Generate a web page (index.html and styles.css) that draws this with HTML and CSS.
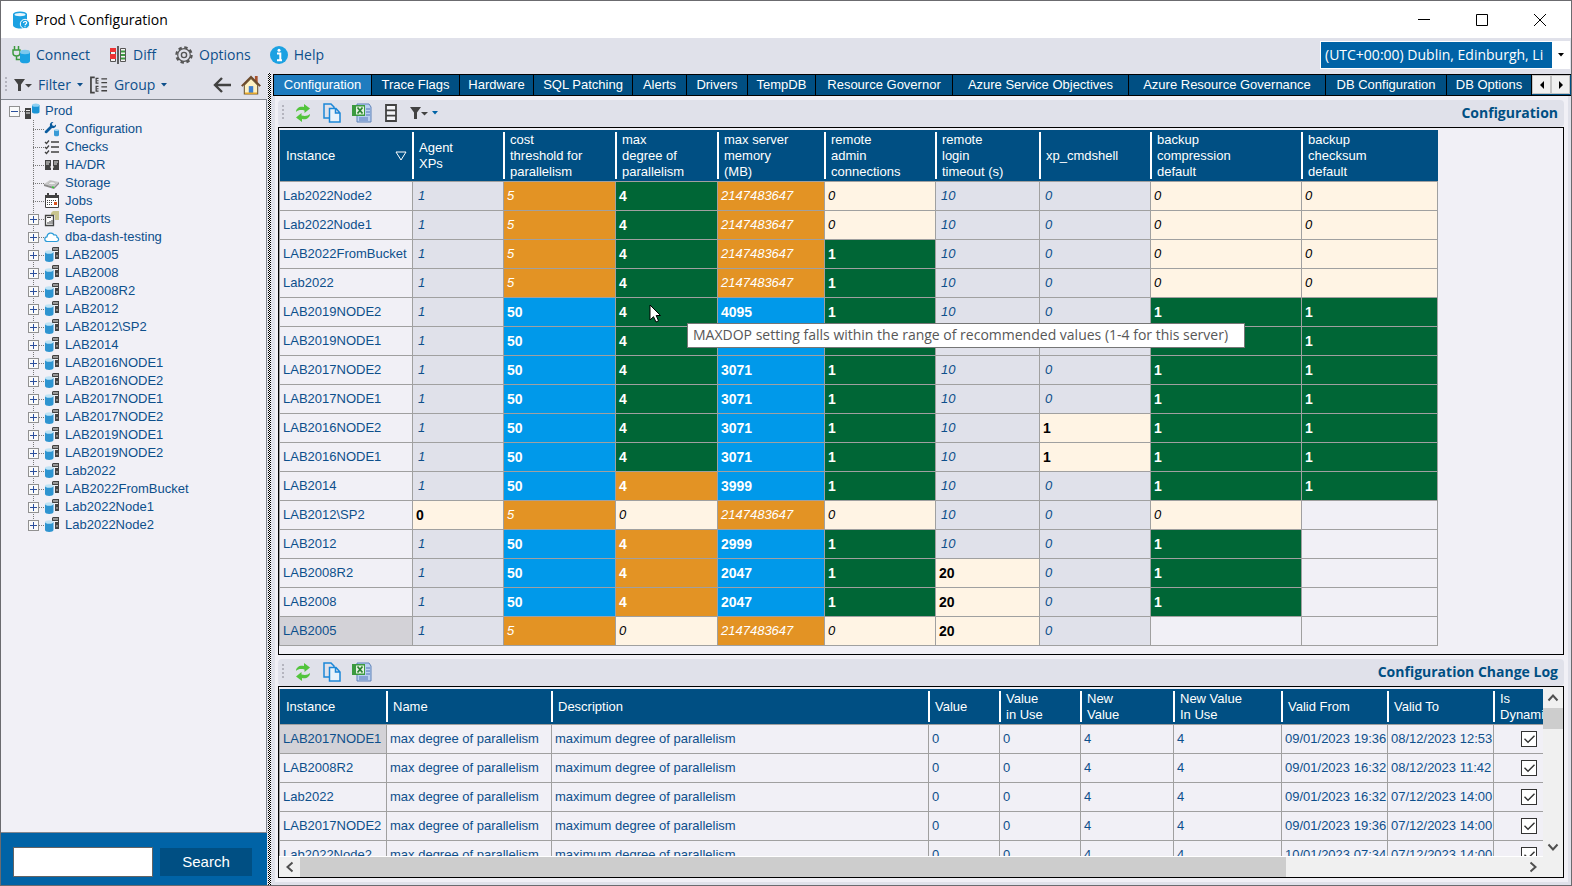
FILE: index.html
```html
<!DOCTYPE html>
<html lang="en">
<head>
<meta charset="utf-8">
<title>Prod \ Configuration</title>
<link rel="stylesheet" href="styles.css">
</head>
<body>
<svg class="defs" aria-hidden="true">
  <symbol id="i-app" viewBox="0 0 18 18"><path d="M1 3v11c0 2 3 3.500 7 3.500s7-1.500 7-3.500V3z" fill="#1ba1e2"/><ellipse cx="8" cy="3.300" rx="7" ry="2.800" fill="#1ba1e2"/><ellipse cx="8" cy="3.600" rx="5.500" ry="1.700" fill="#e8f6fd"/><circle cx="13" cy="13" r="4.700" fill="#1ba1e2" stroke="#fff"/><path d="M11.500 12c0-2 3.200-2 3.200-.2 0 1.200-1.600 1.200-1.600 2.400M13 15.200v1" stroke="#fff" stroke-width="1.200" fill="none"/></symbol>
  <symbol id="i-connect" viewBox="0 0 18 18"><path d="M2.500 0v4M6.500 0v4M1 4h7v3c0 2-1.500 3-3.500 3S1 9 1 7zM4.500 10v3.500H8" stroke="#3c9a3f" stroke-width="1.500" fill="none"/><path d="M8 6v9c0 1.500 2 2.300 5 2.300s5-.8 5-2.300V6z" fill="#1ba1e2"/><ellipse cx="13" cy="6" rx="5" ry="2.200" fill="#7cc8ee"/></symbol>
  <symbol id="i-diff" viewBox="0 0 18 18"><path d="M1.500 2.500h5v13h-5zM11.500 2.500h5v13h-5z" fill="#f4f4f4" stroke="#555"/><path d="M1 2h6v4H1zM1 8h6v5H1z" fill="#e33"/><path d="M12 5.500h4M12 9h4M12 12.500h4" stroke="#3c9a3f" stroke-width="2"/><path d="M9 0v18" stroke="#333" stroke-width="1.500"/></symbol>
  <symbol id="i-gear" viewBox="0 0 18 18"><circle cx="9" cy="9" r="7.600" fill="none" stroke="#555" stroke-width="2.200" stroke-dasharray="3.400 2.570"/><circle cx="9" cy="9" r="6.300" fill="none" stroke="#555" stroke-width="1.200"/><circle cx="9" cy="9" r="2.600" fill="none" stroke="#555" stroke-width="1.400"/></symbol>
  <symbol id="i-help" viewBox="0 0 18 18"><circle cx="9" cy="9" r="9" fill="#1ba1e2"/><path d="M7 7.500h3.300V14M7 14.200h5" stroke="#fff" stroke-width="2" fill="none"/><circle cx="9" cy="4.200" r="1.500" fill="#fff"/></symbol>
  <symbol id="i-filter" viewBox="0 0 18 14"><path d="M0 1h11L7 6.500V13H4V6.500z" fill="#424242"/><path d="M11 6h7l-3.500 3.500z" fill="#424242"/></symbol>
  <symbol id="i-group" viewBox="0 0 19 18"><path d="M5 1H1v16h4" fill="none" stroke="#424242" stroke-width="1.800"/><path d="M9 2H6.500v5H9M9 10.500H6.500v5H9" fill="none" stroke="#424242" stroke-width="1.300"/><path d="M7 4.500h2M7 13h2" stroke="#424242"/><path d="M12 2.500h6M12 6.500h6M12 11h6M12 15h6" stroke="#424242" stroke-width="1.500"/></symbol>
  <symbol id="i-back" viewBox="0 0 18 16"><path d="M9 1L2 8l7 7M2 8h16" fill="none" stroke="#424242" stroke-width="2.400"/></symbol>
  <symbol id="i-home" viewBox="0 0 18 18"><path d="M12.500 1H15v6l-2.500-2z" fill="#a8522d"/><path d="M3 9l6-6 6 6v8H3z" fill="#fff2c4" stroke="#6e5a3a"/><path d="M7 10h4v7H7z" fill="#3d7fd0"/><path d="M3.500 16.500h11" stroke="#e4a72c" stroke-width="1.500"/><path d="M.7 10L9 1.700 17.300 10" fill="none" stroke="#6d4a2b" stroke-width="1.800"/></symbol>
  <symbol id="i-root" viewBox="0 0 16 16"><path d="M0 5h6v11H0z" fill="#424242"/><path d="M1 7.500h4M1 10h4" stroke="#eee"/><path d="M7 2v7c0 1 2 1.500 3.800 1.500S14.500 10 14.500 9V2z" fill="#1b95d6"/><ellipse cx="10.750" cy="2.200" rx="3.700" ry="1.600" fill="#8fd0f2"/></symbol>
  <symbol id="i-config" viewBox="0 0 16 16"><path d="M1 10l5-5c-.7-2.500 1-4.500 3.500-4L7.800 2.800 8.500 4.500l1.700.6L12 3.500c.5 2.300-1.500 4.200-4 3.500l-5 5c-1.500 1-3-.8-2-2z" fill="#0b5c9e"/><path d="M10 9v5c0 .9 1 1.300 2.500 1.300S15 14.900 15 14V9z" fill="#3a9bd6"/><ellipse cx="12.500" cy="9" rx="2.500" ry="1.100" fill="#a9d8f1"/></symbol>
  <symbol id="i-checks" viewBox="0 0 16 16"><path d="M1 3l1.500 1.500L5 1.500M1 8l1.500 1.500L5 6.500M1 13l1.500 1.500L5 11.500M7 3h8M7 8h8M7 13h8" fill="none" stroke="#424242" stroke-width="1.300"/></symbol>
  <symbol id="i-hadr" viewBox="0 0 16 16"><path d="M1 3h6v10H1zM9 3h6v10H9z" fill="#424242"/><path d="M2 5h4M2 7h3M10 5h4M10 7h3M6 10h4" stroke="#eee"/></symbol>
  <symbol id="i-storage" viewBox="0 0 16 16"><path d="M0 9l6-4 9 2-5 5z" fill="#c8c8c8"/><path d="M0 9l10 3 5-5v2l-5 5L0 11z" fill="#8a8a8a"/><ellipse cx="8" cy="8.300" rx="3.300" ry="1.500" fill="#eee" stroke="#999" stroke-width=".5"/><path d="M8 12l2 .5" stroke="#3c3" stroke-width="1.500"/></symbol>
  <symbol id="i-jobs" viewBox="0 0 16 16"><path d="M1.500 2.500h13v12h-13z" fill="#fff" stroke="#424242"/><path d="M1 2h14v3H1z" fill="#424242"/><path d="M4 0v3M12 0v3" stroke="#424242" stroke-width="2"/><path d="M3 7.500h10M3 9.500h6M3 11.500h6" stroke="#424242" stroke-dasharray="1 1"/><path d="M10 9h3v3h-3z" fill="#d9531e"/></symbol>
  <symbol id="i-reports" viewBox="0 0 16 16"><path d="M7 2l2-2h6v9h-4V4H7z" fill="#c9c58e"/><path d="M1.500 4.500h8v10h-8z" fill="#fff" stroke="#424242" stroke-width="1.300"/><path d="M3 6.500h4M4 13v-2M6 13v-3M8 13V9" stroke="#424242"/></symbol>
  <symbol id="i-cloud" viewBox="0 0 16 16"><path d="M3.500 12.500c-3.500 0-3.500-4.500-.5-4.700.2-4 5.500-5 7-1.800 2-.7 3.300.8 3 2.300 2.500.7 2 4.200-.6 4.200z" fill="#fff" stroke="#2b9bd8" stroke-width="1.200"/></symbol>
  <symbol id="i-server" viewBox="0 0 16 16"><path d="M9 0h6v12h-4V4H8V1z" fill="#424242"/><path d="M9 2h5M11 4.500h3" stroke="#eee"/><path d="M12 9h2" stroke="#ccc"/><path d="M1 5v8c0 1.200 2 2 4.200 2s4.300-.8 4.300-2V5z" fill="#2e94d0"/><ellipse cx="5.200" cy="5" rx="4.200" ry="1.800" fill="#bfe2f4"/></symbol>
  <symbol id="i-refresh" viewBox="0 0 16 18"><path d="M1 8c0-4 4-6 8-5V0l6 4.500L9.500 9V6.500C6 5.500 3 6 1 8z" fill="#52c43c"/><path d="M15 10c0 4-4 6-8 5v3l-6-4.500L6.500 9v2.500c3.500 1 6.500.5 8.500-1.500z" fill="#52c43c"/></symbol>
  <symbol id="i-copy" viewBox="0 0 18 20"><path d="M6 15H1V1h7l3 3v2" fill="none" stroke="#1b87d8" stroke-width="1.500"/><path d="M6.500 5.500H13L17 10v9H6.500zM12.500 5.500V10H17" fill="#e8f3fb" stroke="#1b87d8" stroke-width="1.500"/></symbol>
  <symbol id="i-excel" viewBox="0 0 20 20"><path d="M5 1h12l2 3v15H5z" fill="#b9d0f0" stroke="#5f83b9"/><path d="M14 6h4M14 9h4M14 12h4M7 15h9M7 17h9" stroke="#5577b8"/><path d="M0 2h13v11H0z" fill="#3c9a3f"/><path d="M4 3.500h8v8H4z" fill="#e5f3e0"/><path d="M5.500 4.500l5 6M10.500 4.500l-5 6" stroke="#2c8431" stroke-width="1.800"/></symbol>
  <symbol id="i-cols" viewBox="0 0 12 18"><path d="M1 1h10v16H1zM1 6.300h10M1 11.600h10" fill="#f4f4f8" stroke="#424242" stroke-width="1.800"/></symbol>
  <symbol id="i-caret" viewBox="0 0 6 4"><path d="M0 0h6L3 3.500z" fill="currentColor"/></symbol>
  <symbol id="i-chev" viewBox="0 0 12 12"><path d="M1.500 8.500L6 3.500l4.500 5" fill="none" stroke="#505050" stroke-width="2"/></symbol>
</svg>

<header class="title-bar">
  <svg class="ico18"><use href="#i-app"/></svg>
  <h1>Prod \ Configuration</h1>
  <div class="win-buttons">
    <button aria-label="Minimize"><svg class="ico12" viewBox="0 0 12 12"><path d="M0 5.500h12" stroke="#000"/></svg></button>
    <button aria-label="Maximize"><svg class="ico12" viewBox="0 0 12 12"><path d="M.5.500h11v11H.5z" stroke="#000" fill="none"/></svg></button>
    <button aria-label="Close"><svg class="ico12" viewBox="0 0 12 12"><path d="M0 0l12 12M12 0L0 12" stroke="#000"/></svg></button>
  </div>
</header>

<nav class="menu-bar">
  <button><svg class="ico18"><use href="#i-connect"/></svg>Connect</button>
  <button><svg class="ico18"><use href="#i-diff"/></svg>Diff</button>
  <button><svg class="ico18"><use href="#i-gear"/></svg>Options</button>
  <button><svg class="ico18"><use href="#i-help"/></svg>Help</button>
  <label class="zone">
    <select aria-label="Time zone"><option>(UTC+00:00) Dublin, Edinburgh, Li</option></select>
    <svg class="caret"><use href="#i-caret"/></svg>
  </label>
</nav>

<main class="work">
  <aside class="side">
    <div class="side-tools">
      <span class="grip"></span>
      <button><svg class="ico-filter"><use href="#i-filter"/></svg>Filter<svg class="caret"><use href="#i-caret"/></svg></button>
      <button><svg class="ico18"><use href="#i-group"/></svg>Group<svg class="caret"><use href="#i-caret"/></svg></button>
      <span class="spacer"></span>
      <button class="nav-btn" aria-label="Back"><svg class="ico18"><use href="#i-back"/></svg></button>
      <button class="nav-btn" aria-label="Home"><svg class="ico20"><use href="#i-home"/></svg></button>
    </div>
    <div class="tree">
      <div class="root"><button class="exp open" aria-label="Collapse"></button><i class="dots"></i><svg class="ico16"><use href="#i-root"/></svg>Prod</div>
      <ul>
        <li><i class="stub"></i><svg class="ico16"><use href="#i-config"/></svg>Configuration</li>
        <li><i class="stub"></i><svg class="ico16"><use href="#i-checks"/></svg>Checks</li>
        <li><i class="stub"></i><svg class="ico16"><use href="#i-hadr"/></svg>HA/DR</li>
        <li><i class="stub"></i><svg class="ico16"><use href="#i-storage"/></svg>Storage</li>
        <li><i class="stub"></i><svg class="ico16"><use href="#i-jobs"/></svg>Jobs</li>
        <li><button class="exp" aria-label="Expand"></button><i class="dots"></i><svg class="ico16"><use href="#i-reports"/></svg>Reports</li>
        <li><button class="exp" aria-label="Expand"></button><i class="dots"></i><svg class="ico16"><use href="#i-cloud"/></svg>dba-dash-testing</li>
        <li><button class="exp" aria-label="Expand"></button><i class="dots"></i><svg class="ico16"><use href="#i-server"/></svg>LAB2005</li>
        <li><button class="exp" aria-label="Expand"></button><i class="dots"></i><svg class="ico16"><use href="#i-server"/></svg>LAB2008</li>
        <li><button class="exp" aria-label="Expand"></button><i class="dots"></i><svg class="ico16"><use href="#i-server"/></svg>LAB2008R2</li>
        <li><button class="exp" aria-label="Expand"></button><i class="dots"></i><svg class="ico16"><use href="#i-server"/></svg>LAB2012</li>
        <li><button class="exp" aria-label="Expand"></button><i class="dots"></i><svg class="ico16"><use href="#i-server"/></svg>LAB2012\SP2</li>
        <li><button class="exp" aria-label="Expand"></button><i class="dots"></i><svg class="ico16"><use href="#i-server"/></svg>LAB2014</li>
        <li><button class="exp" aria-label="Expand"></button><i class="dots"></i><svg class="ico16"><use href="#i-server"/></svg>LAB2016NODE1</li>
        <li><button class="exp" aria-label="Expand"></button><i class="dots"></i><svg class="ico16"><use href="#i-server"/></svg>LAB2016NODE2</li>
        <li><button class="exp" aria-label="Expand"></button><i class="dots"></i><svg class="ico16"><use href="#i-server"/></svg>LAB2017NODE1</li>
        <li><button class="exp" aria-label="Expand"></button><i class="dots"></i><svg class="ico16"><use href="#i-server"/></svg>LAB2017NODE2</li>
        <li><button class="exp" aria-label="Expand"></button><i class="dots"></i><svg class="ico16"><use href="#i-server"/></svg>LAB2019NODE1</li>
        <li><button class="exp" aria-label="Expand"></button><i class="dots"></i><svg class="ico16"><use href="#i-server"/></svg>LAB2019NODE2</li>
        <li><button class="exp" aria-label="Expand"></button><i class="dots"></i><svg class="ico16"><use href="#i-server"/></svg>Lab2022</li>
        <li><button class="exp" aria-label="Expand"></button><i class="dots"></i><svg class="ico16"><use href="#i-server"/></svg>LAB2022FromBucket</li>
        <li><button class="exp" aria-label="Expand"></button><i class="dots"></i><svg class="ico16"><use href="#i-server"/></svg>Lab2022Node1</li>
        <li><button class="exp" aria-label="Expand"></button><i class="dots"></i><svg class="ico16"><use href="#i-server"/></svg>Lab2022Node2</li>
      </ul>
    </div>
    <form class="search"><input type="text" aria-label="Search text"><button type="button">Search</button></form>
  </aside>
  <div class="splitter"></div>

  <section class="content">
    <div class="tabs" role="tablist">
      <button role="tab" class="active">Configuration</button><button role="tab">Trace Flags</button><button role="tab">Hardware</button><button role="tab">SQL Patching</button><button role="tab">Alerts</button><button role="tab">Drivers</button><button role="tab">TempDB</button><button role="tab">Resource Governor</button><button role="tab">Azure Service Objectives</button><button role="tab">Azure Resource Governance</button><button role="tab">DB Configuration</button><button role="tab">DB Options</button>
      <div class="tab-scroll">
        <button aria-label="Scroll tabs left"><svg class="ico8" viewBox="0 0 8 8"><path d="M6 0v8L2 4z"/></svg></button>
        <button aria-label="Scroll tabs right"><svg class="ico8" viewBox="0 0 8 8"><path d="M2 0v8l4-4z"/></svg></button>
      </div>
    </div>
    <div class="page">
      <div class="bar">
        <span class="grip"></span>
        <button aria-label="Refresh"><svg class="ico18"><use href="#i-refresh"/></svg></button>
        <button aria-label="Copy"><svg class="ico20"><use href="#i-copy"/></svg></button>
        <button aria-label="Excel"><svg class="ico20"><use href="#i-excel"/></svg></button>
        <button aria-label="Columns"><svg class="ico18"><use href="#i-cols"/></svg></button>
        <button aria-label="Filter"><svg class="ico-filter"><use href="#i-filter"/></svg><svg class="caret"><use href="#i-caret"/></svg></button>
        <h2>Configuration</h2>
      </div>
      <div class="grid top-grid">
        <table class="config">
          <colgroup><col class="c133"><col class="c91"><col class="c112"><col class="c102"><col class="c107"><col class="c111"><col class="c104"><col class="c111"><col class="c151"><col class="c136"></colgroup>
          <thead><tr>
            <th><span class="sorted">Instance<svg class="ico-sort" viewBox="0 0 12 10"><path d="M1 1h10L6 9z" fill="none" stroke="#fff"/></svg></span></th>
            <th>Agent<br>XPs</th><th>cost<br>threshold for<br>parallelism</th><th>max<br>degree of<br>parallelism</th><th>max server<br>memory<br>(MB)</th><th>remote<br>admin<br>connections</th><th>remote<br>login<br>timeout (s)</th><th>xp_cmdshell</th><th>backup<br>compression<br>default</th><th>backup<br>checksum<br>default</th>
          </tr></thead>
          <tbody>
            <tr><td>Lab2022Node2</td><td class="def">1</td><td class="warn">5</td><td class="good">4</td><td class="warn">2147483647</td><td class="note">0</td><td class="def">10</td><td class="def">0</td><td class="note">0</td><td class="note">0</td></tr>
            <tr><td>Lab2022Node1</td><td class="def">1</td><td class="warn">5</td><td class="good">4</td><td class="warn">2147483647</td><td class="note">0</td><td class="def">10</td><td class="def">0</td><td class="note">0</td><td class="note">0</td></tr>
            <tr><td>LAB2022FromBucket</td><td class="def">1</td><td class="warn">5</td><td class="good">4</td><td class="warn">2147483647</td><td class="good">1</td><td class="def">10</td><td class="def">0</td><td class="note">0</td><td class="note">0</td></tr>
            <tr><td>Lab2022</td><td class="def">1</td><td class="warn">5</td><td class="good">4</td><td class="warn">2147483647</td><td class="good">1</td><td class="def">10</td><td class="def">0</td><td class="note">0</td><td class="note">0</td></tr>
            <tr><td>LAB2019NODE2</td><td class="def">1</td><td class="info">50</td><td class="good">4</td><td class="info">4095</td><td class="good">1</td><td class="def">10</td><td class="def">0</td><td class="good">1</td><td class="good">1</td></tr>
            <tr><td>LAB2019NODE1</td><td class="def">1</td><td class="info">50</td><td class="good tip-host">4<svg class="pointer" viewBox="0 0 12 19"><path d="M1 1v15l3.500-3.300L7 18l2.500-1.200L7.200 11.500H11.500z" fill="#fff" stroke="#000"/></svg><span class="tip" role="tooltip">MAXDOP setting falls within the range of recommended values (1-4 for this server)</span></td><td class="info"></td><td class="good"></td><td class="def"></td><td class="def"></td><td class="good"></td><td class="good">1</td></tr>
            <tr><td>LAB2017NODE2</td><td class="def">1</td><td class="info">50</td><td class="good">4</td><td class="info">3071</td><td class="good">1</td><td class="def">10</td><td class="def">0</td><td class="good">1</td><td class="good">1</td></tr>
            <tr><td>LAB2017NODE1</td><td class="def">1</td><td class="info">50</td><td class="good">4</td><td class="info">3071</td><td class="good">1</td><td class="def">10</td><td class="def">0</td><td class="good">1</td><td class="good">1</td></tr>
            <tr><td>LAB2016NODE2</td><td class="def">1</td><td class="info">50</td><td class="good">4</td><td class="info">3071</td><td class="good">1</td><td class="def">10</td><td class="note set">1</td><td class="good">1</td><td class="good">1</td></tr>
            <tr><td>LAB2016NODE1</td><td class="def">1</td><td class="info">50</td><td class="good">4</td><td class="info">3071</td><td class="good">1</td><td class="def">10</td><td class="note set">1</td><td class="good">1</td><td class="good">1</td></tr>
            <tr><td>LAB2014</td><td class="def">1</td><td class="info">50</td><td class="warn set">4</td><td class="info">3999</td><td class="good">1</td><td class="def">10</td><td class="def">0</td><td class="good">1</td><td class="good">1</td></tr>
            <tr><td>LAB2012\SP2</td><td class="note set">0</td><td class="warn">5</td><td class="note">0</td><td class="warn">2147483647</td><td class="note">0</td><td class="def">10</td><td class="def">0</td><td class="note">0</td><td></td></tr>
            <tr><td>LAB2012</td><td class="def">1</td><td class="info">50</td><td class="warn set">4</td><td class="info">2999</td><td class="good">1</td><td class="def">10</td><td class="def">0</td><td class="good">1</td><td></td></tr>
            <tr><td>LAB2008R2</td><td class="def">1</td><td class="info">50</td><td class="warn set">4</td><td class="info">2047</td><td class="good">1</td><td class="note set">20</td><td class="def">0</td><td class="good">1</td><td></td></tr>
            <tr><td>LAB2008</td><td class="def">1</td><td class="info">50</td><td class="warn set">4</td><td class="info">2047</td><td class="good">1</td><td class="note set">20</td><td class="def">0</td><td class="good">1</td><td></td></tr>
            <tr><td class="current">LAB2005</td><td class="def">1</td><td class="warn">5</td><td class="note">0</td><td class="warn">2147483647</td><td class="note">0</td><td class="note set">20</td><td class="def">0</td><td></td><td></td></tr>
          </tbody>
        </table>
      </div>
      <div class="bar">
        <span class="grip"></span>
        <button aria-label="Refresh"><svg class="ico18"><use href="#i-refresh"/></svg></button>
        <button aria-label="Copy"><svg class="ico20"><use href="#i-copy"/></svg></button>
        <button aria-label="Excel"><svg class="ico20"><use href="#i-excel"/></svg></button>
        <h2>Configuration Change Log</h2>
      </div>
      <div class="grid log-grid">
        <div class="log-view">
          <table class="log">
            <colgroup><col class="c107"><col class="c165"><col class="c377"><col class="c71"><col class="c81"><col class="c93"><col class="c108"><col class="c106"><col class="c106"><col class="c70"></colgroup>
            <thead><tr><th>Instance</th><th>Name</th><th>Description</th><th>Value</th><th>Value<br>in Use</th><th>New<br>Value</th><th>New Value<br>In Use</th><th>Valid From</th><th>Valid To</th><th>Is<br>Dynamic</th></tr></thead>
            <tbody>
              <tr><td class="current">LAB2017NODE1</td><td>max degree of parallelism</td><td>maximum degree of parallelism</td><td>0</td><td>0</td><td>4</td><td>4</td><td>09/01/2023 19:36</td><td>08/12/2023 12:53</td><td class="check"><input type="checkbox" aria-label="Is dynamic" checked></td></tr>
              <tr><td>LAB2008R2</td><td>max degree of parallelism</td><td>maximum degree of parallelism</td><td>0</td><td>0</td><td>4</td><td>4</td><td>09/01/2023 16:32</td><td>08/12/2023 11:42</td><td class="check"><input type="checkbox" aria-label="Is dynamic" checked></td></tr>
              <tr><td>Lab2022</td><td>max degree of parallelism</td><td>maximum degree of parallelism</td><td>0</td><td>0</td><td>4</td><td>4</td><td>09/01/2023 16:32</td><td>07/12/2023 14:00</td><td class="check"><input type="checkbox" aria-label="Is dynamic" checked></td></tr>
              <tr><td>LAB2017NODE2</td><td>max degree of parallelism</td><td>maximum degree of parallelism</td><td>0</td><td>0</td><td>4</td><td>4</td><td>09/01/2023 19:36</td><td>07/12/2023 14:00</td><td class="check"><input type="checkbox" aria-label="Is dynamic" checked></td></tr>
              <tr><td>Lab2022Node2</td><td>max degree of parallelism</td><td>maximum degree of parallelism</td><td>0</td><td>0</td><td>4</td><td>4</td><td>10/01/2023 07:34</td><td>07/12/2023 14:00</td><td class="check"><input type="checkbox" aria-label="Is dynamic" checked></td></tr>
            </tbody>
          </table>
        </div>
        <div class="vscroll"><button aria-label="Scroll up"><svg class="ico12"><use href="#i-chev"/></svg></button><span class="thumb"></span><button class="last down" aria-label="Scroll down"><svg class="ico12"><use href="#i-chev"/></svg></button></div>
        <div class="hscroll"><button class="left" aria-label="Scroll left"><svg class="ico12"><use href="#i-chev"/></svg></button><span class="thumb"></span><button class="last right" aria-label="Scroll right"><svg class="ico12"><use href="#i-chev"/></svg></button></div>
      </div>
    </div>
  </section>
</main>
</body>
</html>
```
FILE: styles.css
```css
* { box-sizing: border-box; }

:root {
  --navy: #004f83;
  --blue: #0063a6;
  --text: #0d4f8b;
  --panel: #e0e1ea;
  --cell: #f1f0f6;
  --line: #a0a0a0;
  --ui: "Open Sans", "Noto Sans", sans-serif;
  --grid: "Liberation Sans", Arial, sans-serif;
}

body {
  margin: 0;
  height: 100vh;
  display: flex;
  flex-direction: column;
  overflow: hidden;
  border: 1px solid #6b6b6f;
  background: var(--panel);
  color: var(--text);
  font: 13px/16px var(--grid);
}

button {
  padding: 0;
  border: 0;
  background: none;
  color: inherit;
  font: inherit;
  display: flex;
  align-items: center;
}

svg { display: block; flex: none; }
.defs { position: absolute; width: 0; height: 0; }
.ico8 { width: 8px; height: 8px; }
.ico12 { width: 12px; height: 12px; }
.ico16 { width: 16px; height: 16px; }
.ico18 { width: 18px; height: 18px; }
.ico20 { width: 20px; height: 20px; }
.ico-filter { width: 18px; height: 14px; }
.ico-sort { width: 12px; height: 10px; }
.caret { width: 6px; height: 4px; }

/* Title bar */
.title-bar {
  flex: none;
  height: 37px;
  display: flex;
  align-items: center;
  gap: 5px;
  padding-left: 11px;
  background: #fff;
}
.title-bar h1 { margin: 0; font: 14px/20px var(--ui); color: #000; }
.win-buttons { margin-left: auto; padding-right: 2px; display: flex; }
.win-buttons button { width: 58px; height: 36px; justify-content: center; }

/* Menu */
.menu-bar {
  flex: none;
  height: 35px;
  display: flex;
  align-items: center;
  gap: 19px;
  padding: 0 1px 2px 11px;
  font: 14px/20px var(--ui);
}
.menu-bar button { gap: 6px; }
.zone {
  margin-left: auto;
  display: flex;
  align-items: center;
  height: 28px;
  padding: 1px 6px 1px 1px;
  gap: 6px;
  background: #fff;
  color: #000;
}
.zone select {
  appearance: none;
  width: 231px;
  height: 26px;
  padding: 0 4px;
  border: 0;
  background: var(--blue);
  color: #fff;
  font: 14px/20px var(--ui);
}

/* Work area */
.work { flex: 1; min-height: 0; display: flex; }
.side { flex: none; width: 266px; display: flex; flex-direction: column; }
.side-tools {
  flex: none;
  height: 26px;
  display: flex;
  align-items: center;
  gap: 7px;
  padding: 0 6px 2px 4px;
  font: 14px/20px var(--ui);
}
.side-tools button { gap: 6px; }
.side-tools .nav-btn + .nav-btn { margin-left: 3px; }
.spacer { flex: 1; }
.grip {
  width: 2px;
  height: 16px;
  background: repeating-linear-gradient(#b4b4be 0 2px, transparent 2px 4px);
}

.tree {
  flex: 1;
  min-height: 0;
  overflow: hidden;
  padding: 2px 0 0 7px;
  border: solid #828790;
  border-width: 1px 1px 1px 0;
  background: var(--cell);
}
.tree ul {
  margin: 0;
  padding: 0 0 0 19px;
  list-style: none;
}
.root, .tree li { display: flex; align-items: center; height: 18px; white-space: nowrap; }
.root .ico16 { margin-right: 4px; }
.tree li { background: repeating-linear-gradient(#777 0 1px, transparent 1px 2px) 6px 0 / 1px 18px no-repeat; }
.tree li:last-child { background-size: 1px 9px; }
.tree li .ico16 { margin-right: 5px; }
.exp {
  flex: none;
  width: 11px;
  height: 11px;
  margin: 0 0 0 1px;
  border: 1px solid #919191;
  background:
    linear-gradient(#2b4f9c, #2b4f9c) center / 7px 1px no-repeat,
    linear-gradient(#2b4f9c, #2b4f9c) center / 1px 7px no-repeat,
    #fafafa;
}
.exp.open { background: linear-gradient(#2b4f9c, #2b4f9c) center / 7px 1px no-repeat, #fafafa; }
.dots, .stub { flex: none; width: 5px; height: 1px; background: repeating-linear-gradient(90deg, #777 0 1px, transparent 1px 2px); }
.stub { width: 11px; margin-left: 6px; }

.search {
  flex: none;
  height: 52px;
  display: flex;
  align-items: center;
  gap: 7px;
  padding: 5px 15px 0 12px;
  background: var(--blue);
}
.search input { flex: 1; min-width: 0; height: 30px; padding: 0 4px; border: 1px solid #646464; font: 15px/20px var(--grid); }
.search button { width: 92px; height: 28px; justify-content: center; background: var(--navy); color: #fff; font: 15px/20px var(--grid); }

.splitter { flex: none; width: 3px; margin: 0 2px 0 1px; background: repeating-conic-gradient(#000 0 25%, #fff 0 50%) 0 0 / 2px 2px; }

/* Tabs */
.content { flex: 1; min-width: 0; display: flex; flex-direction: column; padding-top: 1px; }
.tabs {
  flex: none;
  display: grid;
  grid-template-columns: 98px 88px 74px 99px 54px 61px 68px 137px 176px 197px 121px 1fr auto;
  height: 22px;
  border: solid #000;
  border-width: 1px 0 1px 1px;
  background: var(--navy);
  color: #fff;
}
.tabs > button { justify-content: center; border-right: 1px solid #000; white-space: nowrap; }
.tabs .active { background: #1f7cbf; }
.tab-scroll { display: flex; height: 19px; padding-right: 1px; }
.tab-scroll button { width: 19px; justify-content: center; border: 1px solid #c4c4c4; background: #f0f0f0; }

/* Tab page */
.page {
  flex: 1;
  min-height: 0;
  margin: 0 3px 3px 2px;
  padding: 4px 4px 4px 3px;
  display: flex;
  flex-direction: column;
  background: var(--cell);
}
.bar {
  flex: none;
  height: 27px;
  display: flex;
  align-items: center;
  gap: 10px;
  padding: 0 6px 2px 4px;
  border-radius: 4px;
  background: var(--panel);
}
.bar button { gap: 4px; color: var(--blue); }
.bar h2 { margin: 0 0 0 auto; font: bold 14px/20px var(--ui); color: var(--navy); }

.grid { border: 1px solid #000; background: var(--cell); }
.top-grid { flex: none; padding: 2px 0 8px; margin-bottom: 4px; }

table { table-layout: fixed; border-collapse: separate; border-spacing: 0; border-left: 1px solid var(--line); }
.config { width: 1159px; }
.log { width: 1285px; }
.c70 { width: 70px; }
.c71 { width: 71px; }
.c81 { width: 81px; }
.c91 { width: 91px; }
.c93 { width: 93px; }
.c102 { width: 102px; }
.c104 { width: 104px; }
.c106 { width: 106px; }
.c107 { width: 107px; }
.c108 { width: 108px; }
.c111 { width: 111px; }
.c112 { width: 112px; }
.c133 { width: 133px; }
.c136 { width: 136px; }
.c151 { width: 151px; }
.c165 { width: 165px; }
.c377 { width: 377px; }

th {
  padding: 0 6px;
  border-bottom: 1px solid var(--line);
  background: linear-gradient(#fff, #fff) right center / 1px calc(100% - 4px) no-repeat, var(--navy);
  color: #fff;
  font-weight: normal;
  text-align: left;
  white-space: nowrap;
  overflow: hidden;
}
th + th { background: linear-gradient(#fff, #fff) left center / 1px calc(100% - 4px) no-repeat, linear-gradient(#fff, #fff) right center / 1px calc(100% - 4px) no-repeat, var(--navy); }
th:last-child { background: linear-gradient(#fff, #fff) left center / 1px calc(100% - 4px) no-repeat, var(--navy); }
.config th { height: 52px; }
.log th { height: 36px; }
.sorted { display: flex; align-items: center; justify-content: space-between; }
td {
  height: 29px;
  padding: 0 3px;
  border: solid var(--line);
  border-width: 0 1px 1px 0;
  background: var(--cell);
  white-space: nowrap;
}
.current { background: #d3d2d7; }
.def { padding-left: 5px; background: var(--panel); font-style: italic; }
.warn { background: #e39324; color: #fff; font-style: italic; }
.note { background: #fff4e4; color: #000; font-style: italic; }
.good { background: #006636; color: #fff; font-weight: bold; font-size: 14px; }
.info { background: #0099ea; color: #fff; font-weight: bold; font-size: 14px; }
.set { font-weight: bold; font-style: normal; font-size: 14px; }

/* Tooltip and pointer shown over the cells */
.tip-host { position: relative; }
.pointer { position: absolute; left: 33px; top: -23px; width: 12px; height: 19px; }
.tip {
  position: absolute;
  z-index: 1;
  left: 71px;
  top: -4px;
  min-width: 558px;
  height: 25px;
  padding: 0 5px;
  border: 1px solid #767676;
  background: #fff;
  color: #575757;
  font: 14px/22px var(--ui);
}

/* Change log */
.log-grid {
  flex: 1;
  min-height: 0;
  display: grid;
  grid-template: minmax(0, 1fr) 20px / minmax(0, 1fr) 20px;
  background: #f0f0f0;
}
.log-view { overflow: hidden; padding-top: 2px; background: var(--cell); border-bottom: 1px solid #fff; }
.check { text-align: right; padding-right: 26px; }
.check input {
  appearance: none;
  display: inline-block;
  vertical-align: middle;
  width: 16px;
  height: 16px;
  margin: 0;
  border: 1px solid #333;
  background: #fff;
}
.check input::before {
  content: "";
  display: block;
  width: 14px;
  height: 14px;
  background: #333;
  clip-path: polygon(2px 7px, 3px 6px, 6px 9px, 12px 3px, 13px 4px, 6px 11px);
}
.vscroll { display: flex; flex-direction: column; background: #f0f0f0; }
.vscroll button { height: 21px; justify-content: center; }
.vscroll .thumb { height: 21px; background: #cdcdcd; }
.vscroll .last { margin-top: auto; }
.hscroll { display: flex; background: #f0f0f0; }
.hscroll button { width: 21px; justify-content: center; }
.hscroll .thumb { width: 78%; background: #cdcdcd; }
.hscroll .last { margin-left: auto; }
.down svg { transform: rotate(180deg); }
.left svg { transform: rotate(-90deg); }
.right svg { transform: rotate(90deg); }
```
